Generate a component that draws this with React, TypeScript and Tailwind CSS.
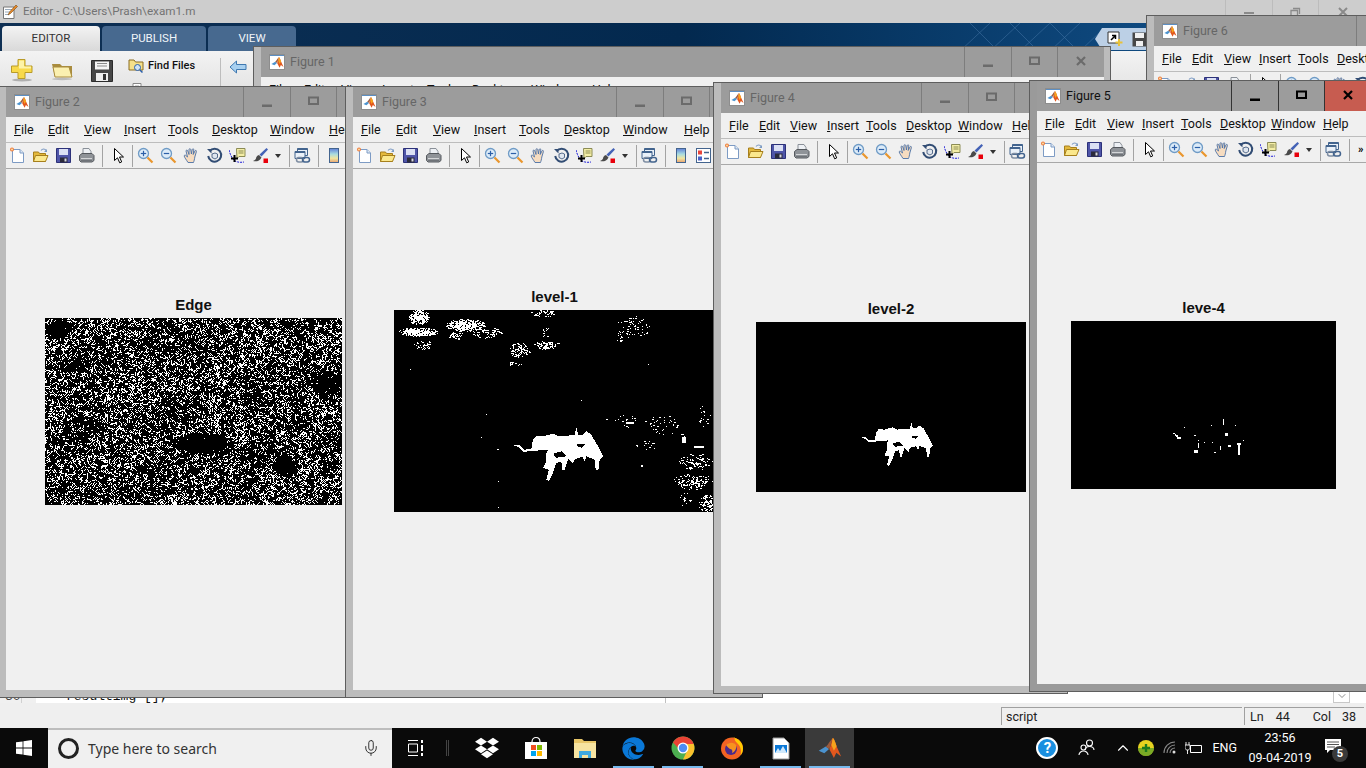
import React, { useMemo, useId } from "react";
import { FaEdge, FaDropbox } from "react-icons/fa";
import { Mic, ChevronUp, ChevronDown } from "lucide-react";

function prng(seed: number) {
  let a = seed >>> 0;
  return () => {
    a = (a + 0x6d2b79f5) >>> 0;
    let t = a;
    t = Math.imul(t ^ (t >>> 15), t | 1);
    t ^= t + Math.imul(t ^ (t >>> 7), t | 61);
    return ((t ^ (t >>> 14)) >>> 0) / 4294967296;
  };
}

const ANIMAL: [number, number][] = [
  [340, 436], [360, 436], [372, 450], [395, 448], [400, 420], [410, 408], [430, 410], [460, 402], [478, 410], [525, 406], [530, 382], [535, 405], [550, 405], [560, 395], [575, 405], [595, 440], [610, 470], [600, 480], [596, 512], [588, 510], [585, 480], [560, 470], [555, 485], [548, 472], [525, 478], [520, 492], [505, 478], [495, 510], [488, 510], [485, 486], [470, 490], [460, 520], [448, 545], [440, 540], [448, 510], [430, 505], [440, 485], [440, 460], [445, 450], [420, 452], [395, 455], [372, 456], [355, 442],
];
const HOLES: [number, number][][] = [
  [[530, 432], [555, 434], [548, 444], [536, 442]],
  [[460, 462], [485, 455], [500, 470], [470, 474]],
];

function animalPath(ox: number, oy: number, s: number) {
  const conv = (pts: [number, number][]) =>
    "M" + pts.map(([x, y]) => `${(ox + ((x - 340) / 3) * s).toFixed(1)} ${(oy + ((y - 382) / 3) * s).toFixed(1)}`).join("L") + "z";
  return conv(ANIMAL) + HOLES.map(conv).join("");
}

function EdgeImage() {
  const d = useMemo(() => {
    const W = 297;
    const H = 187;
    const r = prng(71);
    const grid = new Uint8Array(W * H);
    const dark: [number, number, number, number, number][] = [
      [158, 125, 34, 12, 0], [12, 10, 16, 10, 0.1], [30, 47, 20, 10, 0.3], [282, 64, 22, 14, 0.1], [240, 147, 14, 12, 0.1], [48, 107, 14, 8, 0.35], [120, 30, 20, 8, 0.6], [250, 105, 18, 10, 0.6], [100, 150, 16, 8, 0.6],
    ];
    const density = (x: number, y: number) => {
      let den = 0.85 + 0.15 * Math.sin(x / 23 + y / 17) * Math.cos(y / 29 - x / 41);
      for (const [cx, cy, rx, ry, f] of dark) {
        const q = ((x - cx) / rx) ** 2 + ((y - cy) / ry) ** 2;
        if (q < 1) den = Math.min(den, f + (1 - f) * q * q);
      }
      return den;
    };
    const dirs = [[1, 0], [1, 1], [0, 1], [-1, 1]];
    const walks = Math.floor(W * H * 0.2);
    for (let i = 0; i < walks; i++) {
      let x = Math.floor(r() * W);
      let y = Math.floor(r() * H);
      if (r() > density(x, y)) continue;
      let dir = Math.floor(r() * 4);
      const len = 1 + Math.floor(r() * 2.6);
      for (let k = 0; k < len; k++) {
        if (x >= 0 && x < W && y >= 0 && y < H && r() < density(x, y) + 0.1) grid[y * W + x] = 1;
        x += dirs[dir][0];
        y += dirs[dir][1];
      }
    }
    let p = "";
    for (let y = 0; y < H; y++) {
      for (let x = 0; x < W; x++) {
        if (grid[y * W + x]) {
          let len = 1;
          while (x + len < W && grid[y * W + x + len]) len++;
          p += `M${x} ${y}h${len}v1h-${len}z`;
          x += len;
        }
      }
    }
    return p;
  }, []);
  return (
    <svg viewBox="0 0 297 187" className="block h-[187px] w-[297px] shrink-0" shapeRendering="crispEdges">
      <rect width="297" height="187" fill="#000" />
      <path d={d} fill="#fff" />
    </svg>
  );
}

function Level1Image() {
  const d = useMemo(() => {
    const r = prng(9);
    // ellipse clusters in zoom units: cx, cy, rx, ry, density
    const clusters: [number, number, number, number, number][] = [
      [55, 95, 60, 14, 0.95], [55, 50, 32, 24, 0.8], [70, 135, 30, 14, 0.35], [195, 75, 60, 20, 0.8], [260, 100, 45, 18, 0.4], [165, 105, 22, 18, 0.4], [440, 135, 40, 14, 0.55], [360, 150, 32, 24, 0.5], [345, 190, 20, 10, 0.3], [430, 40, 40, 12, 0.35], [435, 95, 14, 18, 0.25], [700, 80, 50, 40, 0.14], [660, 110, 14, 20, 0.2], [790, 375, 60, 30, 0.1], [660, 360, 50, 25, 0.05], [745, 435, 45, 20, 0.1], [890, 485, 55, 25, 0.28], [880, 545, 60, 25, 0.3], [920, 610, 25, 28, 0.5], [855, 600, 20, 25, 0.15], [840, 400, 20, 15, 0.12], [915, 350, 25, 40, 0.08],
    ];
    let p = "";
    for (const [cx, cy, rx, ry, den] of clusters) {
      for (let y = cy - ry; y < cy + ry; y += 3) {
        for (let x = cx - rx; x < cx + rx; x += 3) {
          const q = ((x - cx) / rx) ** 2 + ((y - cy) / ry) ** 2;
          if (q < 1 && r() < den * (1 - q * 0.7)) {
            const len = r() < 0.3 ? 2 : 1;
            p += `M${Math.round(6 + x / 3)} ${Math.round(y / 3 - 10)}h${len}v1h-${len}z`;
          }
        }
      }
    }
    return p;
  }, []);
  return (
    <svg viewBox="0 0 321 202" className="block h-[202px] w-[321px] shrink-0" shapeRendering="crispEdges">
      <rect width="321" height="202" fill="#000" />
      <path d={d} fill="#fff" />
      <path d={animalPath(119, 117, 1)} fill="#fff" fillRule="evenodd" />
      <path d="M232 112h8v2h-8zM288 127h4v6h-4zM103 139h2v1h-2zM300 136h10v2h-10zM16 59h1v1h-1zM92 104h1v1h-1zM87 127h1v1h-1zM247 155h2v2h-2zM104 197h1v1h-1zM104 171h1v1h-1zM187 90h1v1h-1zM254 54h1v1h-1z" fill="#fff" />
    </svg>
  );
}

function Level2Image() {
  return (
    <svg viewBox="0 0 270 170" className="block h-[170px] w-[270px] shrink-0" shapeRendering="crispEdges">
      <rect width="270" height="170" fill="#000" />
      <path d={animalPath(104, 100, 0.81)} fill="#fff" fillRule="evenodd" />
    </svg>
  );
}

function Level4Image() {
  const rects = [
    [40, 68, 4, 4], [44, 72, 4, 4], [48, 76, 4, 4], [52, 80, 10, 5], [72, 50, 2, 2], [102, 75, 6, 3], [113, 90, 3, 3], [115, 100, 2, 12], [132, 95, 2, 4], [155, 95, 3, 3], [195, 68, 8, 8], [188, 28, 2, 15], [152, 45, 2, 2], [225, 45, 2, 2], [205, 105, 6, 6], [232, 100, 10, 3], [235, 103, 4, 30], [102, 120, 10, 8], [180, 108, 2, 10], [163, 125, 4, 4], [250, 90, 2, 2],
  ];
  return (
    <svg viewBox="0 0 265 168" className="block h-[168px] w-[265px] shrink-0" shapeRendering="crispEdges">
      <rect width="265" height="168" fill="#000" />
      {rects.map(([x, y, w, h], i) => (
        <rect key={i} x={89 + x / 3} y={89 + y / 3} width={w / 3 + 0.4} height={h / 3 + 0.4} fill="#fff" />
      ))}
    </svg>
  );
}

function Membrane({ size = 16 }: { size?: number }) {
  return (
    <svg width={size} height={size} viewBox="0 0 16 16">
      <path d="M.5 9.800 5.200 7l2.200 1.600-3.200 2.900z" fill="#4b93cf" />
      <path d="M5.200 7.200 7.600 8.600 9.800 1.600C8.600 2 7.200 5.200 5.200 7.200z" fill="#9c5a3c" />
      <path d="M9.800 1.400c1 .2 2 3.600 2.600 5.400l3 6.800-3.200-2.400-1.600 3.400-3-5.800C8.600 6.800 9 3.600 9.800 1.400z" fill="#e2571e" />
      <path d="M9.800 1.400c1 .2 2 3.600 2.600 5.400l-1.800 3-1.600-3.600z" fill="#f5a31c" />
    </svg>
  );
}

function TitleIcon() {
  return (
    <div className="flex h-[16px] w-[16px] shrink-0 flex-col border border-[#8d8d8d] bg-white">
      <div className="h-[2px] bg-[#5c8fc4]" />
      <div className="flex flex-1 items-center justify-center">
        <Membrane size={13} />
      </div>
    </div>
  );
}

const I = ({ children }: { children: React.ReactNode }) => (
  <div className="flex w-[23px] shrink-0 items-center justify-center">
    <svg width="17" height="17" viewBox="0 0 17 17">
      {children}
    </svg>
  </div>
);

function NewIcon() {
  return (
    <I>
      <path d="M3.500 2.500h7.500l3.500 3.500v9.500h-11z" fill="#fff" stroke="#7d9bc4" />
      <path d="M11 2.500V6h3.500" fill="#dfe8f4" stroke="#7d9bc4" />
      <circle cx="3" cy="2.500" r="2" fill="#ee7b3a" />
      <circle cx="3" cy="2.500" r="1" fill="#fbe0a8" />
    </I>
  );
}
function OpenIcon() {
  return (
    <I>
      <path d="M1.500 5h5l1 1.500h6v8h-12z" fill="#e4b93c" stroke="#a67f1c" />
      <path d="M1.500 14.500 3.500 8.500h12.500l-2.500 6z" fill="#fbe88d" stroke="#a67f1c" />
      <path d="M9 3.500c1.500-2 4-2 5 0" fill="none" stroke="#7d9bc4" strokeWidth="1.200" />
      <path d="M15 2v3h-3z" fill="#7d9bc4" />
    </I>
  );
}
function SaveIcon() {
  return (
    <I>
      <path d="M1.500 1.500h14v14h-14z" fill="#4f55a8" stroke="#2c3179" />
      <path d="M4 2h9v6H4z" fill="#dbe0f4" />
      <path d="M5 10.500h7.500v5H5z" fill="#2a2a3a" />
      <path d="M9.500 11.500h2v3h-2z" fill="#d7d7e0" />
    </I>
  );
}
function PrintIcon() {
  return (
    <I>
      <path d="M5 1.500h6l2 3v4H5z" fill="#eef1f5" stroke="#8a9098" />
      <path d="M1.500 8.500 4 6.500h10l2 2v5l-2 1.500H3l-1.500-1.500z" fill="#8f9398" stroke="#55595e" />
      <path d="M3 11.500h11" stroke="#d4d6d8" />
      <path d="M3 13.500h11" stroke="#6f7378" />
    </I>
  );
}
function CursorIcon() {
  return (
    <I>
      <path d="M4.500 1.500v12l3-2.700 2.200 5 2-.9-2.200-4.900h4z" fill="#fff" stroke="#000" strokeWidth="1" />
    </I>
  );
}
function ZoomIcon({ plus }: { plus?: boolean }) {
  return (
    <I>
      <circle cx="6.500" cy="6.500" r="5" fill="#dcebf8" stroke="#6f9bc6" strokeWidth="1.300" />
      <path d="M3.800 6.500h5.400" stroke="#2b5fa8" strokeWidth="1.200" />
      {plus && <path d="M6.500 3.800v5.400" stroke="#2b5fa8" strokeWidth="1.200" />}
      <path d="M10.500 10.500l5 5" stroke="#e9962d" strokeWidth="2.200" />
    </I>
  );
}
function HandIcon() {
  return (
    <I>
      <path d="M5 15.500C3.500 13 1.500 10.500 1.200 9c0-1 1-1.200 1.800-.4L4.500 10 3 4c0-1.200 1.400-1.200 1.800 0L6 7.500 6 2.600c0-1.200 1.600-1.200 1.800 0L8.400 7 9.200 2.600c.3-1.200 1.800-1 1.600.3L10.200 7.500l1.800-3.600c.6-1 1.800-.4 1.400.7L11.800 10c-.3 2.500-.8 4-1.300 5.500z" fill="#f6dcc0" stroke="#4a6fa5" strokeWidth=".9" />
    </I>
  );
}
function RotateIcon() {
  return (
    <I>
      <path d="M3.500 4.200A6.500 6.500 0 1 1 2.200 9" fill="none" stroke="#324d74" strokeWidth="2" />
      <path d="M1 2h4.500v4.500z" fill="#324d74" />
      <path d="M6 7l3-1 2.500 1v3.500L9 12 6 10.500z" fill="#dfe6ef" stroke="#324d74" strokeWidth=".8" />
    </I>
  );
}
function TipIcon() {
  return (
    <I>
      <path d="M7.500 1.500h8.500v8H10l-2 2z" fill="#f4eea6" stroke="#8b8b55" />
      <path d="M9.500 4h5M9.500 6h5" stroke="#8b8b55" />
      <path d="M0 3c1 4 3 9 6 11 3 1.500 6 1.500 9 1" fill="none" stroke="#1a1ad8" strokeDasharray="2 1" />
      <path d="M5.500 8v7M2 11.500h7" stroke="#000" strokeWidth="2" />
    </I>
  );
}
function BrushIcon() {
  return (
    <I>
      <path d="M14.500 1 16 2.500 9.500 9.500 7.500 7.500z" fill="#4462b6" />
      <path d="M7 8c-2 .5-3 2-3 3.500-.5 1.200-1.500 2-3 2.500 3 1 7 0 8.500-3.500z" fill="#4a4a4a" />
      <path d="M11.500 11.500H16V16h-4.500z" fill="#e8000b" />
    </I>
  );
}
function LinkIcon() {
  return (
    <I>
      <path d="M3.500 1.500h10v7h-10z" fill="#eaf1f9" stroke="#43648e" />
      <path d="M3.500 1.500h10v1.500h-10z" fill="#43648e" />
      <path d="M1 4.500h10v7H1z" fill="#eaf1f9" stroke="#43648e" />
      <path d="M1 4.500h10V6H1z" fill="#43648e" />
      <rect x="2.500" y="10.500" width="7" height="4.500" rx="2.200" fill="none" stroke="#7f8ea3" strokeWidth="1.500" />
      <rect x="8.500" y="10.500" width="7" height="4.500" rx="2.200" fill="none" stroke="#43648e" strokeWidth="1.500" />
    </I>
  );
}
function ColorbarIcon() {
  const id = useId();
  return (
    <I>
      <defs>
        <linearGradient id={id} x1="0" x2="0" y1="0" y2="1">
          <stop offset="0" stopColor="#5f7fd8" />
          <stop offset=".4" stopColor="#a8dce0" />
          <stop offset=".7" stopColor="#f0e6a0" />
          <stop offset="1" stopColor="#e8a070" />
        </linearGradient>
      </defs>
      <rect x="4.500" y="1.500" width="9" height="14" fill={`url(#${id})`} stroke="#43648e" />
    </I>
  );
}
function LegendIcon() {
  return (
    <I>
      <rect x="1.500" y="1.500" width="14" height="14" fill="#fff" stroke="#43648e" />
      <rect x="3" y="3.500" width="4" height="4" fill="#e8453c" />
      <rect x="3" y="9.500" width="4" height="4" fill="#4a62c8" />
      <path d="M9 5.500h5M9 11.500h5" stroke="#43648e" strokeWidth="1.500" />
    </I>
  );
}

const Sep = ({ cls }: { cls: string }) => <div className={`h-[22px] w-px shrink-0 bg-[#a3a3a3] ${cls}`} />;

function Toolbar({ end }: { end: "full" | "more" }) {
  return (
    <div className="flex h-[26px] shrink-0 items-center overflow-hidden border-b border-[#a8a8a8] bg-[#f0f0f0]">
      <NewIcon />
      <OpenIcon />
      <SaveIcon />
      <PrintIcon />
      <Sep cls="ml-[4px]" />
      <div className="ml-[4px] flex">
        <CursorIcon />
      </div>
      <Sep cls="ml-[2px]" />
      <div className="ml-[1px] flex">
        <ZoomIcon plus />
        <ZoomIcon />
        <HandIcon />
        <RotateIcon />
        <TipIcon />
        <BrushIcon />
      </div>
      <div className="ml-[3px] h-0 w-0 shrink-0 border-x-[3px] border-t-[4px] border-x-transparent border-t-[#333]" />
      <Sep cls="ml-[8px]" />
      <div className="ml-px flex">
        <LinkIcon />
      </div>
      <Sep cls="ml-[4px]" />
      {end === "full" ? (
        <div className="ml-[3px] flex">
          <ColorbarIcon />
          <LegendIcon />
        </div>
      ) : (
        <span className="ml-[8px] text-[11px] font-bold leading-none text-black">»</span>
      )}
    </div>
  );
}

type MenuDef = [string, string, string][];
const mk = (w: string[]): MenuDef =>
  ["File", "Edit", "View", "Insert", "Tools", "Desktop", "Window", "Help"].map((n, i) => [n[0], n.slice(1), w[i]]);

const M2 = mk(["w-[34px]", "w-[36px]", "w-[40px]", "w-[44px]", "w-[44px]", "w-[58px]", "w-[59px]", "w-[40px]"]);
const M3 = mk(["w-[35px]", "w-[37px]", "w-[41px]", "w-[45px]", "w-[45px]", "w-[59px]", "w-[61px]", "w-[40px]"]);
const M4 = mk(["w-[30px]", "w-[31px]", "w-[37px]", "w-[39px]", "w-[40px]", "w-[52px]", "w-[54px]", "w-[40px]"]);
const M5 = mk(["w-[30px]", "w-[32px]", "w-[35px]", "w-[39px]", "w-[39px]", "w-[51px]", "w-[52px]", "w-[40px]"]);

function Win({ pos, title, menu, active, end = "full", children }: { pos: string; title: string; menu: MenuDef; active?: boolean; end?: "full" | "more"; children?: React.ReactNode }) {
  const ctl = active ? "#000" : "#6b6b6b";
  const line = active ? "border-[#333]" : "border-[#7d7d7d]";
  return (
    <div className={`absolute flex flex-col border border-[#5e5e5e] pb-[7px] pl-[7px] pr-[6px] ${active ? "bg-[#9a9a9a]" : "bg-[#bcbcbc]"} ${pos}`}>
      <div className="flex min-h-0 flex-1 flex-col overflow-hidden">
        <div className="flex h-[30px] shrink-0 items-center bg-[#9c9c9c]">
          <div className="ml-[8px]">
            <TitleIcon />
          </div>
          <span className={`ml-[5px] text-[12.500px] ${active ? "text-[#111]" : "text-[#666]"}`}>{title}</span>
          <div className="ml-auto flex h-full">
            <div className={`flex w-[47px] items-center justify-center border-l ${line}`}>
              <svg width="10" height="10" viewBox="0 0 10 10" className="mt-[2px]">
                <path d="M0 6.500h10V9H0z" fill={ctl} />
              </svg>
            </div>
            <div className={`flex w-[46px] items-center justify-center border-l ${line}`}>
              <svg width="11" height="10" viewBox="0 0 11 10" className="-mt-[3px]">
                <rect x="1" y="1.500" width="9" height="6.500" fill="none" stroke={ctl} strokeWidth="2" />
              </svg>
            </div>
            <div className={`flex w-[47px] items-center justify-center border-l ${line} ${active ? "bg-[#c75c50]" : ""}`}>
              <svg width="10" height="10" viewBox="0 0 10 10" className="-mt-[3px]">
                <path d="M1 1l8 8M9 1l-8 8" stroke={ctl} strokeWidth="2.200" />
              </svg>
            </div>
          </div>
        </div>
        <div className="flex h-[26px] shrink-0 items-center whitespace-nowrap border-b border-[#bdbdbd] bg-[#f0f0f0] pl-[8px] pt-[2px] text-[12.500px] text-[#111]">
          {menu.map(([h, r, w]) => (
            <div key={h + r} className={`shrink-0 ${w}`}>
              <span className="underline">{h}</span>
              {r}
            </div>
          ))}
        </div>
        <Toolbar end={end} />
        <div className="min-h-0 flex-1 overflow-hidden bg-[#f0f0f0]">{children}</div>
      </div>
    </div>
  );
}

function Plot({ cls, w, title, children }: { cls: string; w: string; title: string; children: React.ReactNode }) {
  return (
    <div className={`flex ${cls}`}>
      <div className={`flex shrink-0 flex-col ${w}`}>
        <div className="mb-[3px] h-[20px] text-center font-['Liberation_Sans',sans-serif] text-[15px] font-bold leading-[20px] text-[#111]">{title}</div>
        {children}
      </div>
    </div>
  );
}

function RibbonPlus() {
  return (
    <svg width="24" height="24" viewBox="0 0 24 24">
      <ellipse cx="12" cy="22" rx="10" ry="1.500" fill="#777" opacity=".5" />
      <path d="M8 1.500h7v6.500h7v6.500h-7v6h-7v-6H1.500V8H8z" fill="#f8d94a" stroke="#b89b2a" />
      <path d="M9 2.500h5v6h7v2H9z" fill="#fdf3a8" />
    </svg>
  );
}
function RibbonFolder() {
  return (
    <svg width="24" height="24" viewBox="0 0 24 24">
      <ellipse cx="12" cy="21" rx="10" ry="1.200" fill="#777" opacity=".4" />
      <path d="M2 6h8l2 2h10v11H5z" fill="#a98c3e" />
      <path d="M3 9h16l3 10H5z" fill="#fbf0b0" stroke="#a98c3e" />
    </svg>
  );
}
function RibbonSave() {
  return (
    <svg width="24" height="26" viewBox="0 0 24 26">
      <path d="M1.500 2.500h21v21h-21z" fill="#474747" stroke="#2b2b2b" />
      <path d="M5 3.500h14v8H5z" fill="#f4f4f4" />
      <path d="M7 5.500h10M7 8h10" stroke="#888" />
      <path d="M6 15h12v8H6z" fill="#efefef" />
      <path d="M13 16h3v6h-3z" fill="#333" />
    </svg>
  );
}

function TaskIcon({ children, on, active }: { children: React.ReactNode; on?: boolean; active?: boolean }) {
  return (
    <div className={`relative flex h-[40px] w-[49px] shrink-0 items-center justify-center ${active ? "bg-[#3a3a3a]" : ""}`}>
      {children}
      {on && <div className="absolute bottom-0 left-[4px] right-[4px] h-[2px] bg-[#76b9ed]" />}
    </div>
  );
}

export default function App() {
  return (
    <div className="relative flex h-[768px] w-[1366px] flex-col overflow-hidden bg-[#f0f0f0] font-['Roboto',sans-serif]">
      {/* Editor title bar */}
      <div className="flex h-[23px] shrink-0 items-center bg-[#cdcdcd]">
        <svg width="16" height="16" viewBox="0 0 16 16" className="ml-[2px]">
          <path d="M1.500 3h10.500v11.500H1.500z" fill="#fff" stroke="#777" />
          <path d="M3 5.500h7M3 8h6M3 10.500h4" stroke="#9ab" />
          <path d="M6 11l1.500-3L14 1l1.500 1.500L8.500 9.500z" fill="#e78a2a" stroke="#7a4a12" strokeWidth=".6" />
        </svg>
        <span className="ml-[5px] text-[11.700px] text-[#737373]">Editor - C:\Users\Prash\exam1.m</span>
        <div className="ml-auto flex h-full">
          <div className="flex w-[47px] items-center justify-center border-l border-[#bcbcbc]">
            <div className="mt-[3px] h-[2px] w-[10px] bg-[#8a8a8a]" />
          </div>
          <div className="flex w-[46px] items-center justify-center border-l border-[#bcbcbc]">
            <svg width="11" height="11" viewBox="0 0 11 11">
              <path d="M3 2.500h6.500V8M1 4.500h6.500v6H1z" fill="none" stroke="#8a8a8a" strokeWidth="1.300" />
            </svg>
          </div>
          <div className="flex w-[48px] items-center justify-center border-l border-[#bcbcbc]">
            <svg width="10" height="10" viewBox="0 0 10 10">
              <path d="M1 1l8 8M9 1l-8 8" stroke="#8a8a8a" strokeWidth="2" />
            </svg>
          </div>
        </div>
      </div>

      {/* Ribbon tabs */}
      <div className="relative flex h-[28px] shrink-0 items-end bg-gradient-to-r from-[#0e2f53] via-[#03294f] to-[#165a98] pl-[2px] text-[11.500px]">
        <div className="flex h-[25px] w-[98px] items-center justify-center rounded-t-[4px] bg-gradient-to-b from-[#f3f3f3] to-[#d9d9d9] text-[#333]">EDITOR</div>
        <div className="ml-[2px] flex h-[25px] w-[104px] items-center justify-center rounded-t-[4px] bg-[#47698f] text-[#f0f4f8]">PUBLISH</div>
        <div className="ml-[2px] flex h-[25px] w-[88px] items-center justify-center rounded-t-[4px] bg-[#47698f] text-[#f0f4f8]">VIEW</div>
        <svg width="140" height="28" viewBox="0 0 140 28" className="absolute left-[960px] top-0" fill="none" stroke="#5f8fc0" strokeWidth=".6" opacity=".6">
          <path d="M0 28 30 0M30 28 60 0M60 28 90 0M90 28 120 0M120 28 140 9M10 0l28 28M50 0l28 28M90 0l28 28" />
        </svg>
        <div className="relative z-0 mb-[1px] ml-auto mr-[220px] flex h-[22px] w-[44px] items-center gap-[9px] bg-[#bcd0e6] pl-[5px]">
          <div className="absolute left-[-7px] top-0 h-0 w-0 border-y-[11px] border-r-[7px] border-y-transparent border-r-[#bcd0e6]" />
          <svg width="16" height="16" viewBox="0 0 16 16" className="shrink-0">
            <path d="M1 1h11v11H1z" fill="#fff" stroke="#333" />
            <path d="M4 9l4-4M5 4.500h3.500V8" stroke="#000" strokeWidth="1.500" fill="none" />
            <path d="M11 8h2v2.500h2.500v2H13V15h-2v-2.500H8.500v-2H11z" fill="#e8c23a" />
          </svg>
          <svg width="15" height="15" viewBox="0 0 15 15" className="shrink-0">
            <path d="M.500.500h14v14H.500z" fill="#474747" />
            <path d="M3 1h9v5H3zM4 9h7v5H4z" fill="#f0f0f0" />
          </svg>
        </div>
      </div>

      {/* Ribbon */}
      <div className="flex h-[90px] shrink-0 items-start bg-gradient-to-b from-[#f3f3f3] to-[#d0d0d0] pt-[7px]">
        <div className="ml-[10px] flex w-[24px] justify-center">
          <RibbonPlus />
        </div>
        <div className="ml-[16px] flex w-[24px] justify-center">
          <RibbonFolder />
        </div>
        <div className="ml-[16px] flex w-[24px] justify-center">
          <RibbonSave />
        </div>
        <div className="ml-[14px] flex flex-col">
          <div className="flex items-center gap-[4px] text-[11px] font-medium leading-[16px] text-[#111]">
            <svg width="16" height="16" viewBox="0 0 16 16">
              <path d="M1 2h5l1.500 2H15v8H1z" fill="#f5e08a" stroke="#8a6d20" />
              <circle cx="9.500" cy="9.500" r="3" fill="#cfe3f6" stroke="#2b5fa8" />
              <path d="M12 12l2.500 2.500" stroke="#2b5fa8" strokeWidth="1.500" />
            </svg>
            Find Files
          </div>
          <svg width="16" height="16" viewBox="0 0 16 16" className="mt-[9px]">
            <path d="M5 .500h8v14H5z" fill="#fff" stroke="#888" />
            <path d="M7 3h4M7 5h4" stroke="#aaa" />
          </svg>
        </div>
        <div className="ml-[25px] h-[30px] w-px bg-[#bdbdbd]" />
        <svg width="18" height="14" viewBox="0 0 18 14" className="ml-[8px] mt-[2px]">
          <path d="M7.500 1 1 7l6.500 6V9.500H17V4.500H7.500z" fill="#a8d0f0" stroke="#3f78b0" />
        </svg>
      </div>

      {/* Editor text */}
      <div className="flex min-h-0 flex-1 items-end overflow-hidden font-['Liberation_Mono',monospace] text-[13px] leading-[16px]">
        <div className="-mb-[2px] w-[22px] shrink-0 border-r border-[#d0d0d0] pl-[5px] text-[#444]">30</div>
        <div className="h-[16px] w-[14px] shrink-0 bg-[#f0f0f0]" />
        <div className="relative -mb-[2px] flex h-[16px] flex-1 whitespace-nowrap bg-white pl-[30px] pr-[16px] text-[#111]">
          <span>resultimg [];</span>
          <div className="absolute left-[629px] top-0 h-full w-px bg-[#c0c0c0]" />
          <div className="ml-auto flex h-[14px] w-[17px] items-center justify-center border border-[#c8c8c8] bg-white">
            <ChevronDown size={12} strokeWidth={1.500} className="text-[#666]" />
          </div>
        </div>
      </div>

      {/* Status bar */}
      <div className="flex h-[25px] shrink-0 items-center bg-[#efefef] pl-[1001px] text-[12.500px] text-[#222]">
        <div className="flex h-[18px] w-[241px] items-center border-l border-t border-[#a0a0a0] pl-[4px] pt-[2px]">script</div>
        <div className="ml-[2px] flex h-[18px] w-[120px] items-center border-l border-t border-[#a0a0a0] pl-[5px] pt-[2px]">
          <span>Ln</span>
          <span className="ml-[12px]">44</span>
          <span className="ml-[23px]">Col</span>
          <span className="ml-[11px]">38</span>
        </div>
      </div>

      {/* Taskbar */}
      <div className="flex h-[40px] shrink-0 items-center bg-[#0a0a0a] text-white">
        <div className="flex w-[48px] shrink-0 justify-center">
          <svg width="16" height="16" viewBox="0 0 16 16">
            <path d="M0 2.300 6.600 1.400v6.200H0zM7.400 1.300 16 0v7.600H7.400zM0 8.400h6.600v6.200L0 13.700zM7.400 8.400H16V16l-8.600-1.200z" fill="#fff" />
          </svg>
        </div>
        <div className="flex h-[40px] w-[344px] shrink-0 items-center border-t-2 border-[#bdbdbd] bg-[#f0f0f0] pb-[2px] text-[#333]">
          <div className="ml-[10px] h-[21px] w-[21px] shrink-0 rounded-full border-[3px] border-[#222]" />
          <span className="ml-[9px] font-['Noto_Sans',sans-serif] text-[14px]">Type here to search</span>
          <Mic size={18} strokeWidth={1.200} className="ml-auto mr-[12px] text-[#222]" />
        </div>
        <div className="flex w-[70px] shrink-0 items-center">
          <svg width="16" height="16" viewBox="0 0 16 16" className="ml-[16px]">
            <path d="M0 .500h10M0 15.500h10M.500 4h9v8h-9z" fill="none" stroke="#fff" />
            <path d="M13 0h2v3h-2zM13 5h2v6h-2zM13 13h2v3h-2z" fill="#fff" />
          </svg>
          <div className="ml-[22px] h-[16px] w-[3px] border-x border-[#444]" />
        </div>
        <TaskIcon>
          <FaDropbox size={24} color="#fff" />
        </TaskIcon>
        <TaskIcon>
          <svg width="24" height="24" viewBox="0 0 24 24">
            <path d="M8 6c0-6 8-6 8 0" fill="none" stroke="#fff" strokeWidth="1.200" />
            <path d="M1 6h22v17H1z" fill="#fff" />
            <path d="M7 9h5v5H7z" fill="#f25022" />
            <path d="M13 9h5v5h-5z" fill="#7fba00" />
            <path d="M7 15h5v5H7z" fill="#00a4ef" />
            <path d="M13 15h5v5h-5z" fill="#ffb900" />
          </svg>
        </TaskIcon>
        <TaskIcon>
          <svg width="22" height="20" viewBox="0 0 22 20">
            <path d="M0 1h8l2 2h12v17H0z" fill="#e8c668" />
            <path d="M0 5h22v15H0z" fill="#f6e3a0" />
            <path d="M5 13h12v7h-3v-3H8v3H5z" fill="#3fa9e0" />
          </svg>
        </TaskIcon>
        <TaskIcon on>
          <FaEdge size={23} color="#0a78d7" />
        </TaskIcon>
        <TaskIcon on>
          <svg width="24" height="24" viewBox="0 0 24 24">
            <circle cx="12" cy="12" r="11.500" fill="#4caf50" />
            <path d="M12 .500A11.500 11.500 0 0 1 22.700 8H12z" fill="#ea4335" />
            <path d="M2 6.500A11.500 11.500 0 0 1 12 .500V8L8 13z" fill="#ea4335" />
            <path d="M22.700 8A11.500 11.500 0 0 1 12 23.500L16 15V8z" fill="#fbc02d" />
            <circle cx="12" cy="12" r="5.500" fill="#fff" />
            <circle cx="12" cy="12" r="4.200" fill="#4e8df5" />
          </svg>
        </TaskIcon>
        <TaskIcon>
          <svg width="24" height="24" viewBox="0 0 24 24">
            <circle cx="12" cy="12.500" r="11" fill="#f26322" />
            <path d="M12 1.500c6 0 11 5 11 11 0 3-1 5-2.500 7 1-4 .5-9-3-12C15 5 14 3 15 1.500z" fill="#ffcb00" />
            <circle cx="11" cy="13" r="6" fill="#4b2a8a" />
            <path d="M6 9c3-3 8-3 10 0 1 3-1 7-4 8 1-2 0-4-2-4-2-1-3-3-4-4z" fill="#f7931e" />
          </svg>
        </TaskIcon>
        <TaskIcon on>
          <svg width="18" height="23" viewBox="0 0 18 23">
            <path d="M1 1h11l5 5v16H1z" fill="#fff" stroke="#999" />
            <path d="M3 8h12v8H3z" fill="#0a78d7" />
            <path d="M3 16l3-5 2 3 3-5 4 7z" fill="#cfe8fb" />
          </svg>
        </TaskIcon>
        <TaskIcon active on>
          <Membrane size={24} />
        </TaskIcon>

        <div className="ml-auto flex h-full items-center text-[12.500px]">
          <div className="flex h-[22px] w-[22px] items-center justify-center rounded-full border-2 border-white bg-[#1a8fe0] text-[15px] font-bold leading-none">?</div>
          <svg width="18" height="18" viewBox="0 0 18 18" className="ml-[20px]" fill="none" stroke="#fff" strokeWidth="1.100">
            <circle cx="11.500" cy="4" r="3" />
            <path d="M7 11c0-2 2-3.500 4.500-3.500S16 9 16 11" />
            <circle cx="5.500" cy="8.500" r="2.500" />
            <path d="M1 16c0-2 2-4 4.500-4S10 14 10 16" />
          </svg>
          <ChevronUp size={18} strokeWidth={1.500} className="ml-[18px]" />
          <svg width="16" height="16" viewBox="0 0 16 16" className="ml-[6px]">
            <circle cx="8" cy="8" r="8" fill="#e6d320" />
            <path d="M0 8a8 8 0 0 0 16 0z" fill="#4c9a2a" opacity=".7" />
            <path d="M6.800 4h2.400v2.800H12v2.400H9.200V12H6.800V9.200H4V6.800h2.800z" fill="#1d7a1d" />
          </svg>
          <svg width="14" height="14" viewBox="0 0 14 14" className="ml-[9px]" fill="none" stroke="#888" strokeWidth="1.100">
            <path d="M1 12A11 11 0 0 1 12 1M4 12a8 8 0 0 1 8-8M7 12a5 5 0 0 1 5-5" />
            <circle cx="11" cy="11" r="1.500" fill="#ddd" stroke="none" />
          </svg>
          <svg width="17" height="14" viewBox="0 0 17 14" className="ml-[8px]" fill="none" stroke="#fff">
            <path d="M5.500 4.500h11v7h-11z" />
            <path d="M1 4V1M4 4V1M0 4h5v2.500C5 8 4 9 2.500 9S0 8 0 6.500zM2.500 9v4" strokeWidth=".9" />
          </svg>
          <span className="ml-[10px]">ENG</span>
          <div className="ml-[6px] flex w-[74px] flex-col items-center leading-[20px]">
            <span>23:56</span>
            <span>09-04-2019</span>
          </div>
          <div className="relative ml-[8px] mr-[23px] h-[24px] w-[18px]">
            <svg width="16" height="15" viewBox="0 0 16 15" className="mt-[3px]">
              <path d="M0 0h16v11H5l-3 3v-3H0z" fill="#fff" />
              <path d="M2 3h12M2 5.500h12M2 8h8" stroke="#555" />
            </svg>
            <div className="absolute left-[7px] top-[10px] flex h-[16px] w-[16px] items-center justify-center rounded-full bg-[#3a3a3a] text-[11px] font-bold">5</div>
          </div>
        </div>
      </div>

      {/* Desktop windows */}
      <Win pos="left-[253px] top-[46px] z-10 h-[640px] w-[858px]" title="Figure 1" menu={M3} />
      <Win pos="left-[1146px] top-[15px] z-20 h-[640px] w-[357px]" title="Figure 6" menu={M5} />
      <Win pos="left-[-2px] top-[86px] z-30 h-[612px] w-[392px]" title="Figure 2" menu={M2}>
        <Plot cls="pl-[39px] pt-[126px]" w="w-[297px]" title="Edge">
          <EdgeImage />
        </Plot>
      </Win>
      <Win pos="left-[345px] top-[86px] z-40 h-[612px] w-[418px]" title="Figure 3" menu={M3}>
        <Plot cls="pl-[41px] pt-[118px]" w="w-[321px]" title="level-1">
          <Level1Image />
        </Plot>
      </Win>
      <Win pos="left-[713px] top-[82px] z-50 h-[612px] w-[355px]" title="Figure 4" menu={M4}>
        <Plot cls="pl-[35px] pt-[134px]" w="w-[270px]" title="level-2">
          <Level2Image />
        </Plot>
      </Win>
      <Win pos="left-[1029px] top-[80px] z-[60] h-[612px] w-[349px]" title="Figure 5" menu={M5} active end="more">
        <Plot cls="pl-[34px] pt-[135px]" w="w-[265px]" title="leve-4">
          <Level4Image />
        </Plot>
      </Win>
    </div>
  );
}
